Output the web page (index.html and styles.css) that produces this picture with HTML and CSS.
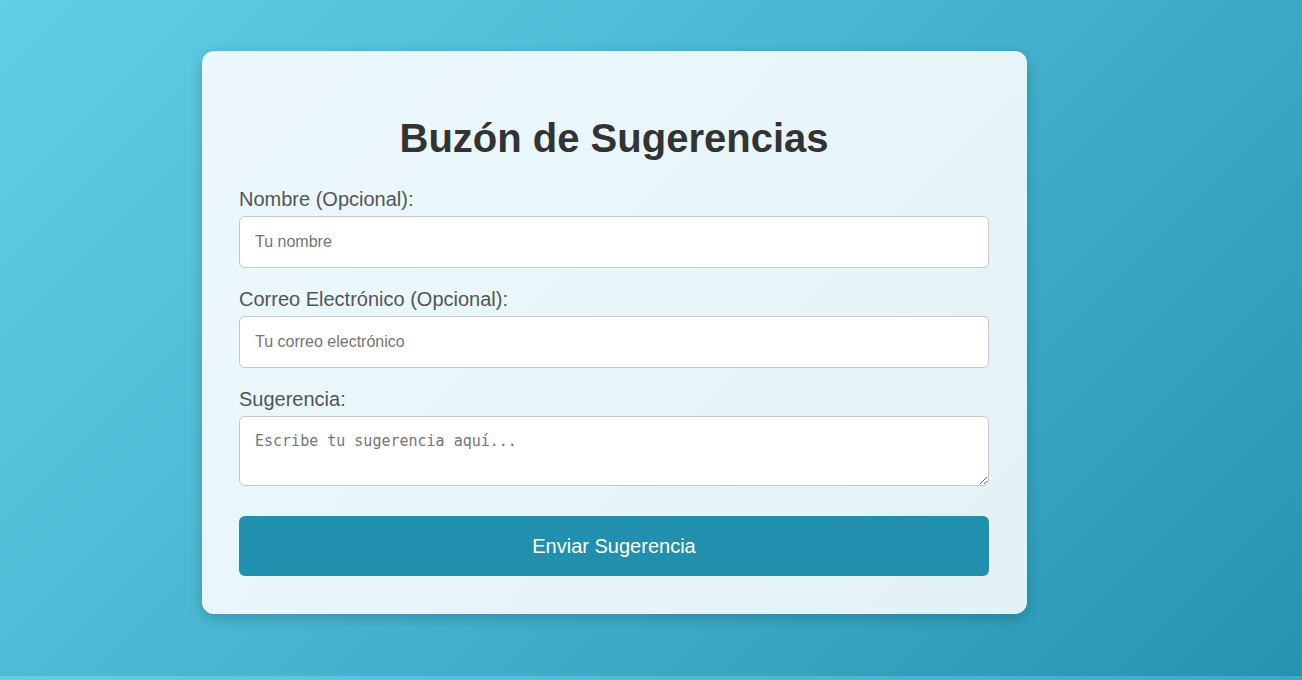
FILE: index.html
```html
<!DOCTYPE html>
<html lang="es">
<head>
<meta charset="utf-8">
<title>Buzón de Sugerencias</title>
<link rel="stylesheet" href="styles.css">
</head>
<body>
<main class="page">
  <form class="card">
    <h1 class="title">Buzón de Sugerencias</h1>
    <label class="label" for="nombre">Nombre (Opcional):</label>
    <input class="field" id="nombre" type="text" placeholder="Tu nombre">
    <label class="label" for="correo">Correo Electrónico (Opcional):</label>
    <input class="field" id="correo" type="email" placeholder="Tu correo electrónico">
    <label class="label" for="sugerencia">Sugerencia:</label>
    <textarea class="area" id="sugerencia" placeholder="Escribe tu sugerencia aquí..."></textarea>
    <button class="submit" type="button">Enviar Sugerencia</button>
  </form>
</main>
</body>
</html>
```

FILE: styles.css
```css
html {
  margin: 0;
}
body {
  margin: 0;
  font-family: "Liberation Sans", Arial, sans-serif;
  background: linear-gradient(135deg, #60d0e6 0%, #45b3cf 50%, #2494b1 100%);
}
.page {
  display: flex;
  padding: 51px 0 62px 202px;
}
.card {
  width: 825px;
  box-sizing: border-box;
  padding: 38px 38px 38px 37px;
  border-radius: 12px;
  background: linear-gradient(135deg, #ecf8fc 0%, #e3f2f6 100%);
  box-shadow: 0 4px 14px rgba(0, 0, 0, 0.2);
  display: flex;
  flex-direction: column;
}
.title {
  margin: 26px 0 27px;
  font-size: 40px;
  font-weight: bold;
  line-height: 46px;
  text-align: center;
  color: #333;
}
.label {
  display: block;
  font-size: 20px;
  line-height: 23px;
  color: #555;
  margin-bottom: 5px;
}
.field,
.area {
  display: block;
  width: 100%;
  box-sizing: border-box;
  border: 1px solid #c8c8c8;
  border-radius: 6px;
  background: #fff;
  margin: 0 0 20px;
  padding: 0 15px;
  color: #333;
}
.field {
  height: 52px;
  font-family: "Liberation Sans", Arial, sans-serif;
  font-size: 16px;
}
.area {
  height: 70px;
  padding: 15px;
  font-family: "DejaVu Sans Mono", monospace;
  font-size: 15px;
  line-height: 18px;
  resize: vertical;
  margin-bottom: 30px;
}
.field::placeholder,
.area::placeholder {
  color: #757575;
}
.submit {
  display: block;
  width: 100%;
  height: 60px;
  border: none;
  border-radius: 6px;
  background: #2190ae;
  color: #fff;
  font-family: "Liberation Sans", Arial, sans-serif;
  font-size: 20px;
  cursor: pointer;
}
```
